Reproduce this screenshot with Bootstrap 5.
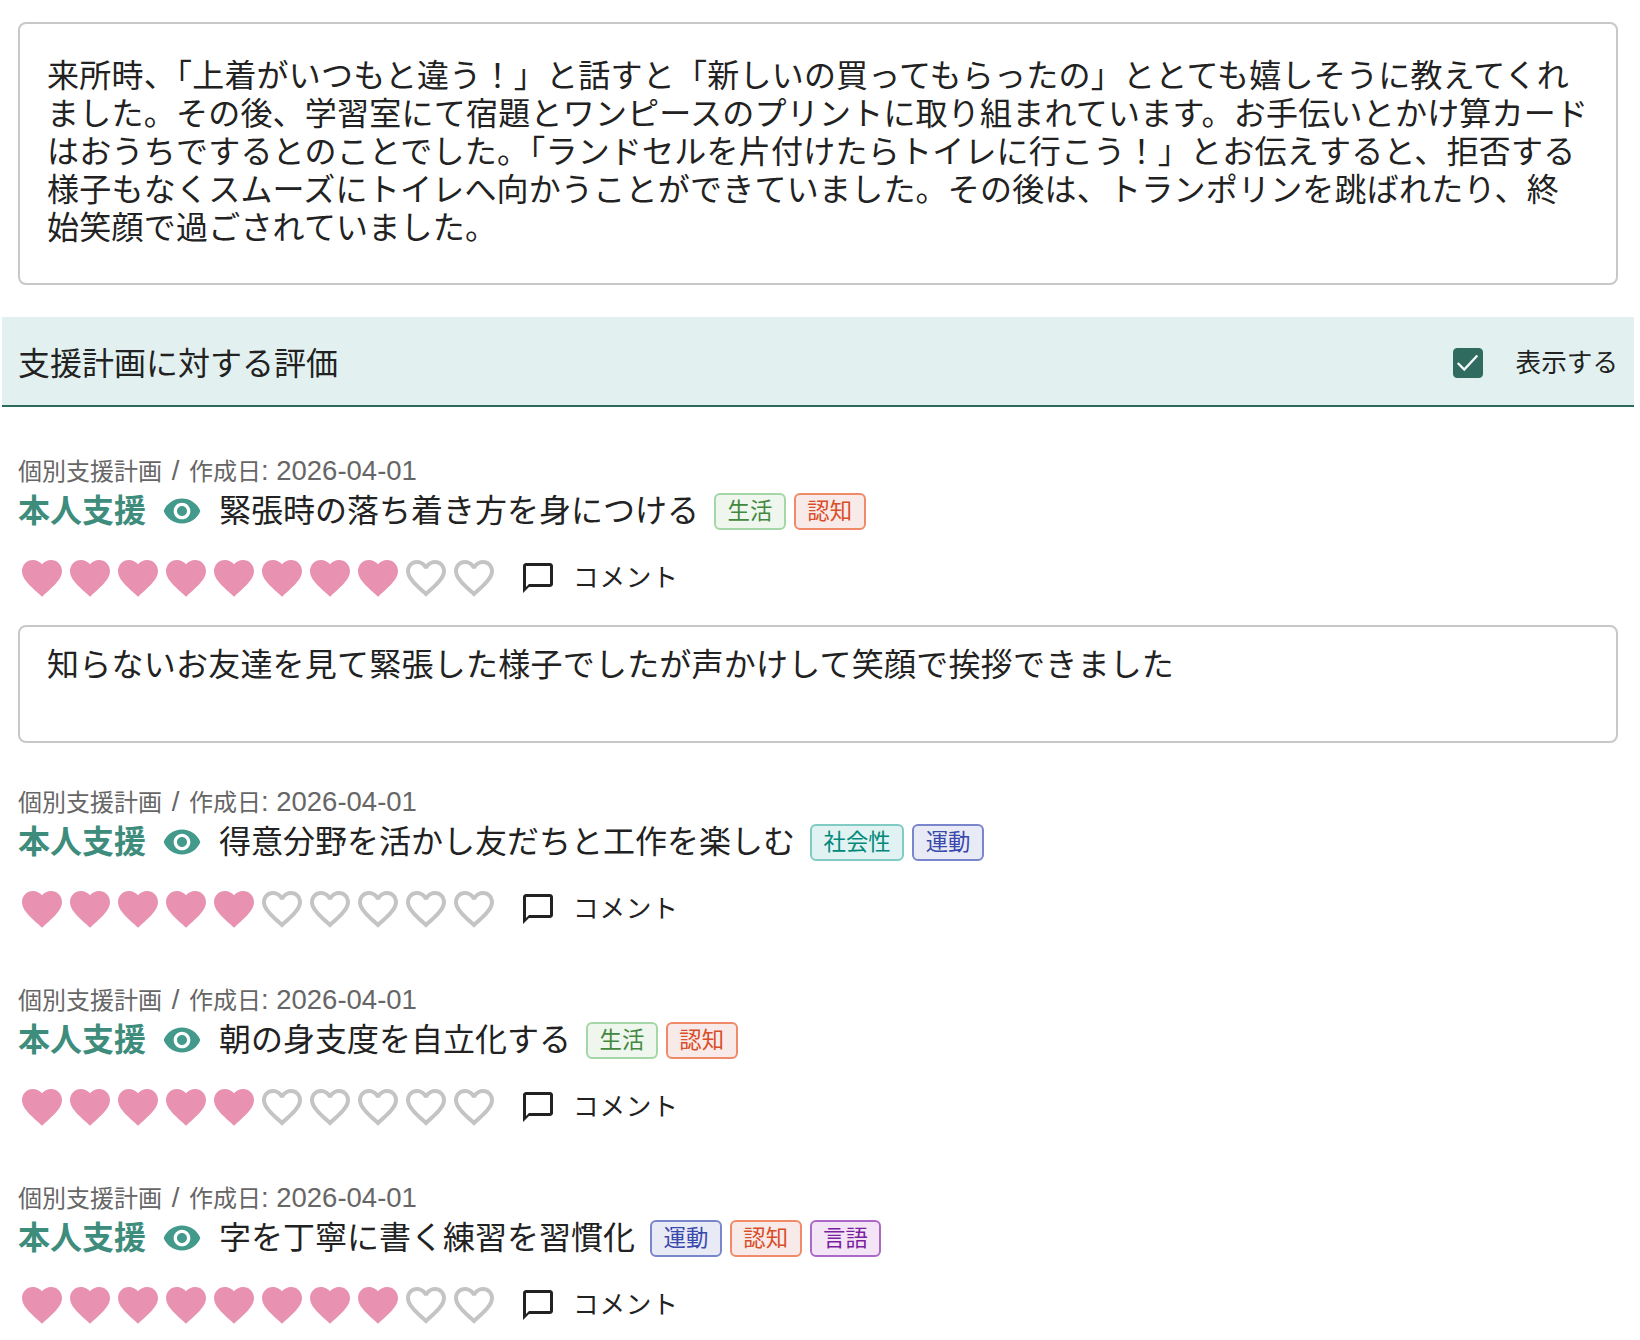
<!DOCTYPE html>
<html lang="ja">

<head>
    <meta charset="UTF-8">
    <title>支援計画に対する評価</title>
    <link href="https://cdn.jsdelivr.net/npm/bootstrap@5.3.0/dist/css/bootstrap.min.css" rel="stylesheet">
    <style>
        body {
            font-family: "Liberation Sans", "Noto Sans CJK JP", sans-serif;
            color: #222;
            background: #fff;
            padding: 22px 6px 0 2px;
            overflow: hidden;
        }

        .note-box {
            font-size: 32px;
            line-height: 38px;
            letter-spacing: .23px;
            color: #222;
            border: 2px solid #c8c8c8;
            border-radius: 8px;
            padding: 19px 15px 17px 27px;
            height: 118px;
            resize: none;
        }

        .note-box.note-main {
            height: 263px;
            padding: 33px 15px 33px 27px;
        }

        .section-head {
            height: 90px;
            margin-top: 32px;
            padding: 5px 16px 0;
            background: #e2f1f0;
            border-bottom: 2px solid #2d6a5e;
            font-size: 32px;
        }

        .show-toggle {
            font-size: 25.6px;
            gap: 33px;
        }

        .show-toggle .form-check-input {
            width: 30px;
            height: 30px;
            margin: 0;
            border-radius: 4px;
            background-color: #2f6b5e;
            border-color: #2f6b5e;
            background-size: 100%;
            background-image: url("data:image/svg+xml,%3csvg xmlns='http://www.w3.org/2000/svg' viewBox='0 0 30 30'%3e%3cpath fill='none' stroke='%23f2f8f6' stroke-width='2.6' d='M4 15l7 7L25 7'/%3e%3c/svg%3e");
        }

        .plan-list {
            padding: 47px 16px 0;
        }

        .plan-item {
            margin-bottom: 50px;
        }

        .plan-item.has-note {
            margin-bottom: 42px;
        }

        .plan-meta {
            font-size: 24px;
            line-height: 35px;
            color: #666;
        }

        .meta-date {
            font-size: 27.5px;
            line-height: 1;
        }

        .meta-slash {
            padding: 0 2px;
        }

        .plan-title {
            font-size: 32px;
            line-height: 44px;
            gap: 8px;
        }

        .plan-kind {
            color: #3d8c7c;
            font-weight: 700;
        }

        .plan-eye {
            width: 40px;
            height: 40px;
            fill: #439a8c;
            margin: 0 9px 0 8px;
        }

        .plan-text {
            margin-right: 7px;
        }

        .tag-chip {
            font-size: 22.4px;
            line-height: 33px;
            padding: 0 11.5px;
            border: 2px solid;
            border-radius: 6px;
        }

        .tag-life { color: #43883f; background: #eef6ee; border-color: #a5d6a7; }
        .tag-cog { color: #d84e28; background: #f8eae8; border-color: #f08a68; }
        .tag-soc { color: #00897b; background: #e0f2f1; border-color: #80cbc4; }
        .tag-motor { color: #3949ab; background: #e8eaf6; border-color: #7986cb; }
        .tag-lang { color: #7b1fa2; background: #f3e5f5; border-color: #ab68c8; }

        .rating-row {
            margin-top: 21px;
            height: 48px;
        }

        .hearts svg {
            display: block;
            width: 48px;
            height: 48px;
        }

        .heart-on { fill: #e891b0; }
        .heart-off { fill: #c4c4c4; }

        .comment-link {
            margin-left: 22px;
            gap: 17px;
            font-size: 25.6px;
            letter-spacing: .8px;
            color: #222;
        }

        .comment-link svg {
            width: 36px;
            height: 36px;
            fill: #222;
        }

        .plan-item .note-box {
            margin-top: 23px;
        }
    </style>
</head>

<body>

    <div class="px-3">
        <textarea class="form-control note-box note-main" rows="5">来所時、「上着がいつもと違う！」と話すと「新しいの買ってもらったの」ととても嬉しそうに教えてくれました。その後、学習室にて宿題とワンピースのプリントに取り組まれています。お手伝いとかけ算カードはおうちでするとのことでした。「ランドセルを片付けたらトイレに行こう！」とお伝えすると、拒否する様子もなくスムーズにトイレへ向かうことができていました。その後は、トランポリンを跳ばれたり、終
始笑顔で過ごされていました。</textarea>
    </div>

    <div class="section-head d-flex align-items-center justify-content-between">
        <span>支援計画に対する評価</span>
        <label class="show-toggle d-flex align-items-center">
            <input class="form-check-input" type="checkbox" checked>
            表示する
        </label>
    </div>

    <div class="plan-list">
        <!-- Plan items -->
        <div class="plan-item has-note">
            <div class="plan-meta">個別支援計画<span class="meta-date meta-slash"> / </span>作成日<span class="meta-date">: 2026-04-01</span></div>
            <div class="plan-title d-flex align-items-center">
                <span class="plan-kind">本人支援</span>
                <svg class="plan-eye" viewBox="0 0 24 24"><use href="#eye-icon"></use></svg>
                <span class="plan-text">緊張時の落ち着き方を身につける</span>
                <span class="tag-chip tag-life">生活</span>
                <span class="tag-chip tag-cog">認知</span>
            </div>
            <div class="rating-row d-flex align-items-center">
                <div class="hearts d-flex" data-rating="8"></div>
                <div class="comment-link d-flex align-items-center">
                    <svg viewBox="0 0 24 24"><use href="#comment-icon"></use></svg>コメント
                </div>
            </div>
            <textarea class="form-control note-box" rows="2">知らないお友達を見て緊張した様子でしたが声かけして笑顔で挨拶できました</textarea>
        </div>

        <div class="plan-item">
            <div class="plan-meta">個別支援計画<span class="meta-date meta-slash"> / </span>作成日<span class="meta-date">: 2026-04-01</span></div>
            <div class="plan-title d-flex align-items-center">
                <span class="plan-kind">本人支援</span>
                <svg class="plan-eye" viewBox="0 0 24 24"><use href="#eye-icon"></use></svg>
                <span class="plan-text">得意分野を活かし友だちと工作を楽しむ</span>
                <span class="tag-chip tag-soc">社会性</span>
                <span class="tag-chip tag-motor">運動</span>
            </div>
            <div class="rating-row d-flex align-items-center">
                <div class="hearts d-flex" data-rating="5"></div>
                <div class="comment-link d-flex align-items-center">
                    <svg viewBox="0 0 24 24"><use href="#comment-icon"></use></svg>コメント
                </div>
            </div>
        </div>

        <div class="plan-item">
            <div class="plan-meta">個別支援計画<span class="meta-date meta-slash"> / </span>作成日<span class="meta-date">: 2026-04-01</span></div>
            <div class="plan-title d-flex align-items-center">
                <span class="plan-kind">本人支援</span>
                <svg class="plan-eye" viewBox="0 0 24 24"><use href="#eye-icon"></use></svg>
                <span class="plan-text">朝の身支度を自立化する</span>
                <span class="tag-chip tag-life">生活</span>
                <span class="tag-chip tag-cog">認知</span>
            </div>
            <div class="rating-row d-flex align-items-center">
                <div class="hearts d-flex" data-rating="5"></div>
                <div class="comment-link d-flex align-items-center">
                    <svg viewBox="0 0 24 24"><use href="#comment-icon"></use></svg>コメント
                </div>
            </div>
        </div>

        <div class="plan-item">
            <div class="plan-meta">個別支援計画<span class="meta-date meta-slash"> / </span>作成日<span class="meta-date">: 2026-04-01</span></div>
            <div class="plan-title d-flex align-items-center">
                <span class="plan-kind">本人支援</span>
                <svg class="plan-eye" viewBox="0 0 24 24"><use href="#eye-icon"></use></svg>
                <span class="plan-text">字を丁寧に書く練習を習慣化</span>
                <span class="tag-chip tag-motor">運動</span>
                <span class="tag-chip tag-cog">認知</span>
                <span class="tag-chip tag-lang">言語</span>
            </div>
            <div class="rating-row d-flex align-items-center">
                <div class="hearts d-flex" data-rating="8"></div>
                <div class="comment-link d-flex align-items-center">
                    <svg viewBox="0 0 24 24"><use href="#comment-icon"></use></svg>コメント
                </div>
            </div>
        </div>
    </div>

    <!-- Shared icons -->
    <svg width="0" height="0" class="position-absolute">
        <symbol id="eye-icon" viewBox="0 0 24 24">
            <path d="M12 4.5C7 4.5 2.73 7.61 1 12c1.73 4.39 6 7.5 11 7.5s9.27-3.11 11-7.5c-1.73-4.39-6-7.5-11-7.5zM12 17c-2.76 0-5-2.24-5-5s2.24-5 5-5 5 2.24 5 5-2.24 5-5 5zm0-8c-1.66 0-3 1.34-3 3s1.34 3 3 3 3-1.34 3-3-1.34-3-3-3z"></path>
        </symbol>
        <symbol id="comment-icon" viewBox="0 0 24 24">
            <path d="M20 2H4c-1.1 0-2 .9-2 2v18l4-4h14c1.1 0 2-.9 2-2V4c0-1.1-.9-2-2-2zm0 14H6l-2 2V4h16v12z"></path>
        </symbol>
        <symbol id="heart-on" viewBox="0 0 24 24">
            <path d="M12 21.35l-1.45-1.32C5.4 15.36 2 12.28 2 8.5 2 5.42 4.42 3 7.5 3c1.74 0 3.41.81 4.5 2.09C13.09 3.81 14.76 3 16.5 3 19.58 3 22 5.42 22 8.5c0 3.78-3.4 6.86-8.55 11.54L12 21.35z"></path>
        </symbol>
        <symbol id="heart-off" viewBox="0 0 24 24">
            <path d="M16.5 3c-1.74 0-3.41.81-4.5 2.09C10.91 3.81 9.24 3 7.5 3 4.42 3 2 5.42 2 8.5c0 3.78 3.4 6.86 8.55 11.54L12 21.35l1.45-1.32C18.6 15.36 22 12.28 22 8.5 22 5.42 19.58 3 16.5 3zm-4.4 15.55l-.1.1-.1-.1C7.14 14.24 4 11.39 4 8.5 4 6.5 5.5 5 7.5 5c1.54 0 3.04.99 3.57 2.36h1.87C13.46 5.99 14.96 5 16.5 5c2 0 3.5 1.5 3.5 3.5 0 2.89-3.14 5.74-7.9 10.05z"></path>
        </symbol>
    </svg>

    <script src="https://cdn.jsdelivr.net/npm/bootstrap@5.3.0/dist/js/bootstrap.bundle.min.js"></script>
    <script>
        // Fill each rating row with ten hearts
        document.querySelectorAll('.hearts').forEach(row => {
            const rating = Number(row.dataset.rating);
            let html = '';
            for (let i = 0; i < 10; i++) {
                const kind = i < rating ? 'heart-on' : 'heart-off';
                html += `<svg class="${kind}" viewBox="0 0 24 24"><use href="#${kind}"></use></svg>`;
            }
            row.innerHTML = html;
        });
    </script>

</body>

</html>
